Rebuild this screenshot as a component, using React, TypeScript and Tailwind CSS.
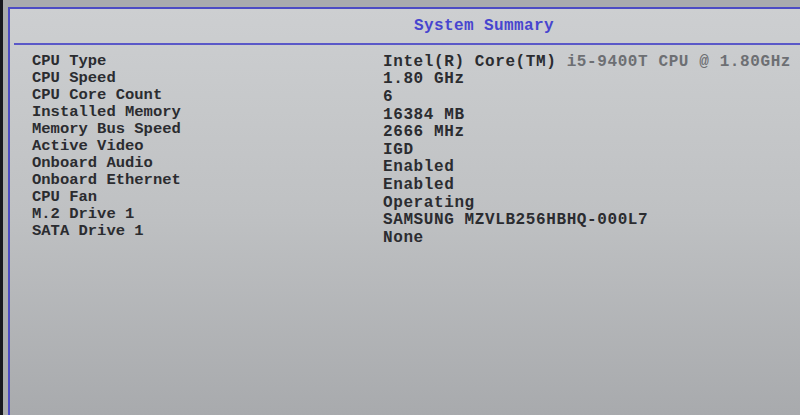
import React from "react";

const rows: { label: string; value: string; dim?: string }[] = [
  { label: "CPU Type", value: "Intel(R) Core(TM) ", dim: "i5-9400T CPU @ 1.80GHz" },
  { label: "CPU Speed", value: "1.80 GHz" },
  { label: "CPU Core Count", value: "6" },
  { label: "Installed Memory", value: "16384 MB" },
  { label: "Memory Bus Speed", value: "2666 MHz" },
  { label: "Active Video", value: "IGD" },
  { label: "Onboard Audio", value: "Enabled" },
  { label: "Onboard Ethernet", value: "Enabled" },
  { label: "CPU Fan", value: "Operating" },
  { label: "M.2 Drive 1", value: "SAMSUNG MZVLB256HBHQ-000L7" },
  { label: "SATA Drive 1", value: "None" },
];

const mono = { fontFamily: '"Liberation Mono", "DejaVu Sans Mono", monospace' };

export default function App() {
  return (
    <div className="flex h-[415px] w-[800px] overflow-hidden bg-[#17181f]" style={mono}>
      <div className="w-[3px] shrink-0" />
      <div className="flex flex-1 flex-col bg-[#a9abae] pl-[5px] pt-[7px]">
        <div className="flex flex-1 flex-col border-l-2 border-t-2 border-[#4c4bc4] bg-linear-to-b from-[#cdcfd1] via-[#bfc1c3] to-[#a8aaad]">
          {/* header */}
          <div className="flex h-[34px] items-center justify-center pl-[158px]">
            <span className="text-[16px] font-bold tracking-[0.4px] text-[#4745cf]">
              System Summary
            </span>
          </div>
          <div className="ml-[4px] h-[2px] bg-[#5a58c8]" />

          {/* summary: labels and values */}
          <div className="flex pl-[22px] pt-[8px]">
            <div className="flex w-[351px] shrink-0 flex-col">
              {rows.map((r) => (
                <div
                  key={r.label}
                  className="flex h-[17px] items-center text-[15.5px] font-bold leading-none text-[#2b2c30]"
                >
                  {r.label}
                </div>
              ))}
            </div>
            <div className="flex flex-col">
              {rows.map((r) => (
                <div
                  key={r.label}
                  className="flex h-[17.6px] items-center whitespace-pre text-[16px] font-bold leading-none tracking-[0.6px] text-[#2b2c30]"
                >
                  {r.value}
                  {r.dim && <span className="text-[#6d6f73]">{r.dim}</span>}
                </div>
              ))}
            </div>
          </div>
        </div>
      </div>
    </div>
  );
}
